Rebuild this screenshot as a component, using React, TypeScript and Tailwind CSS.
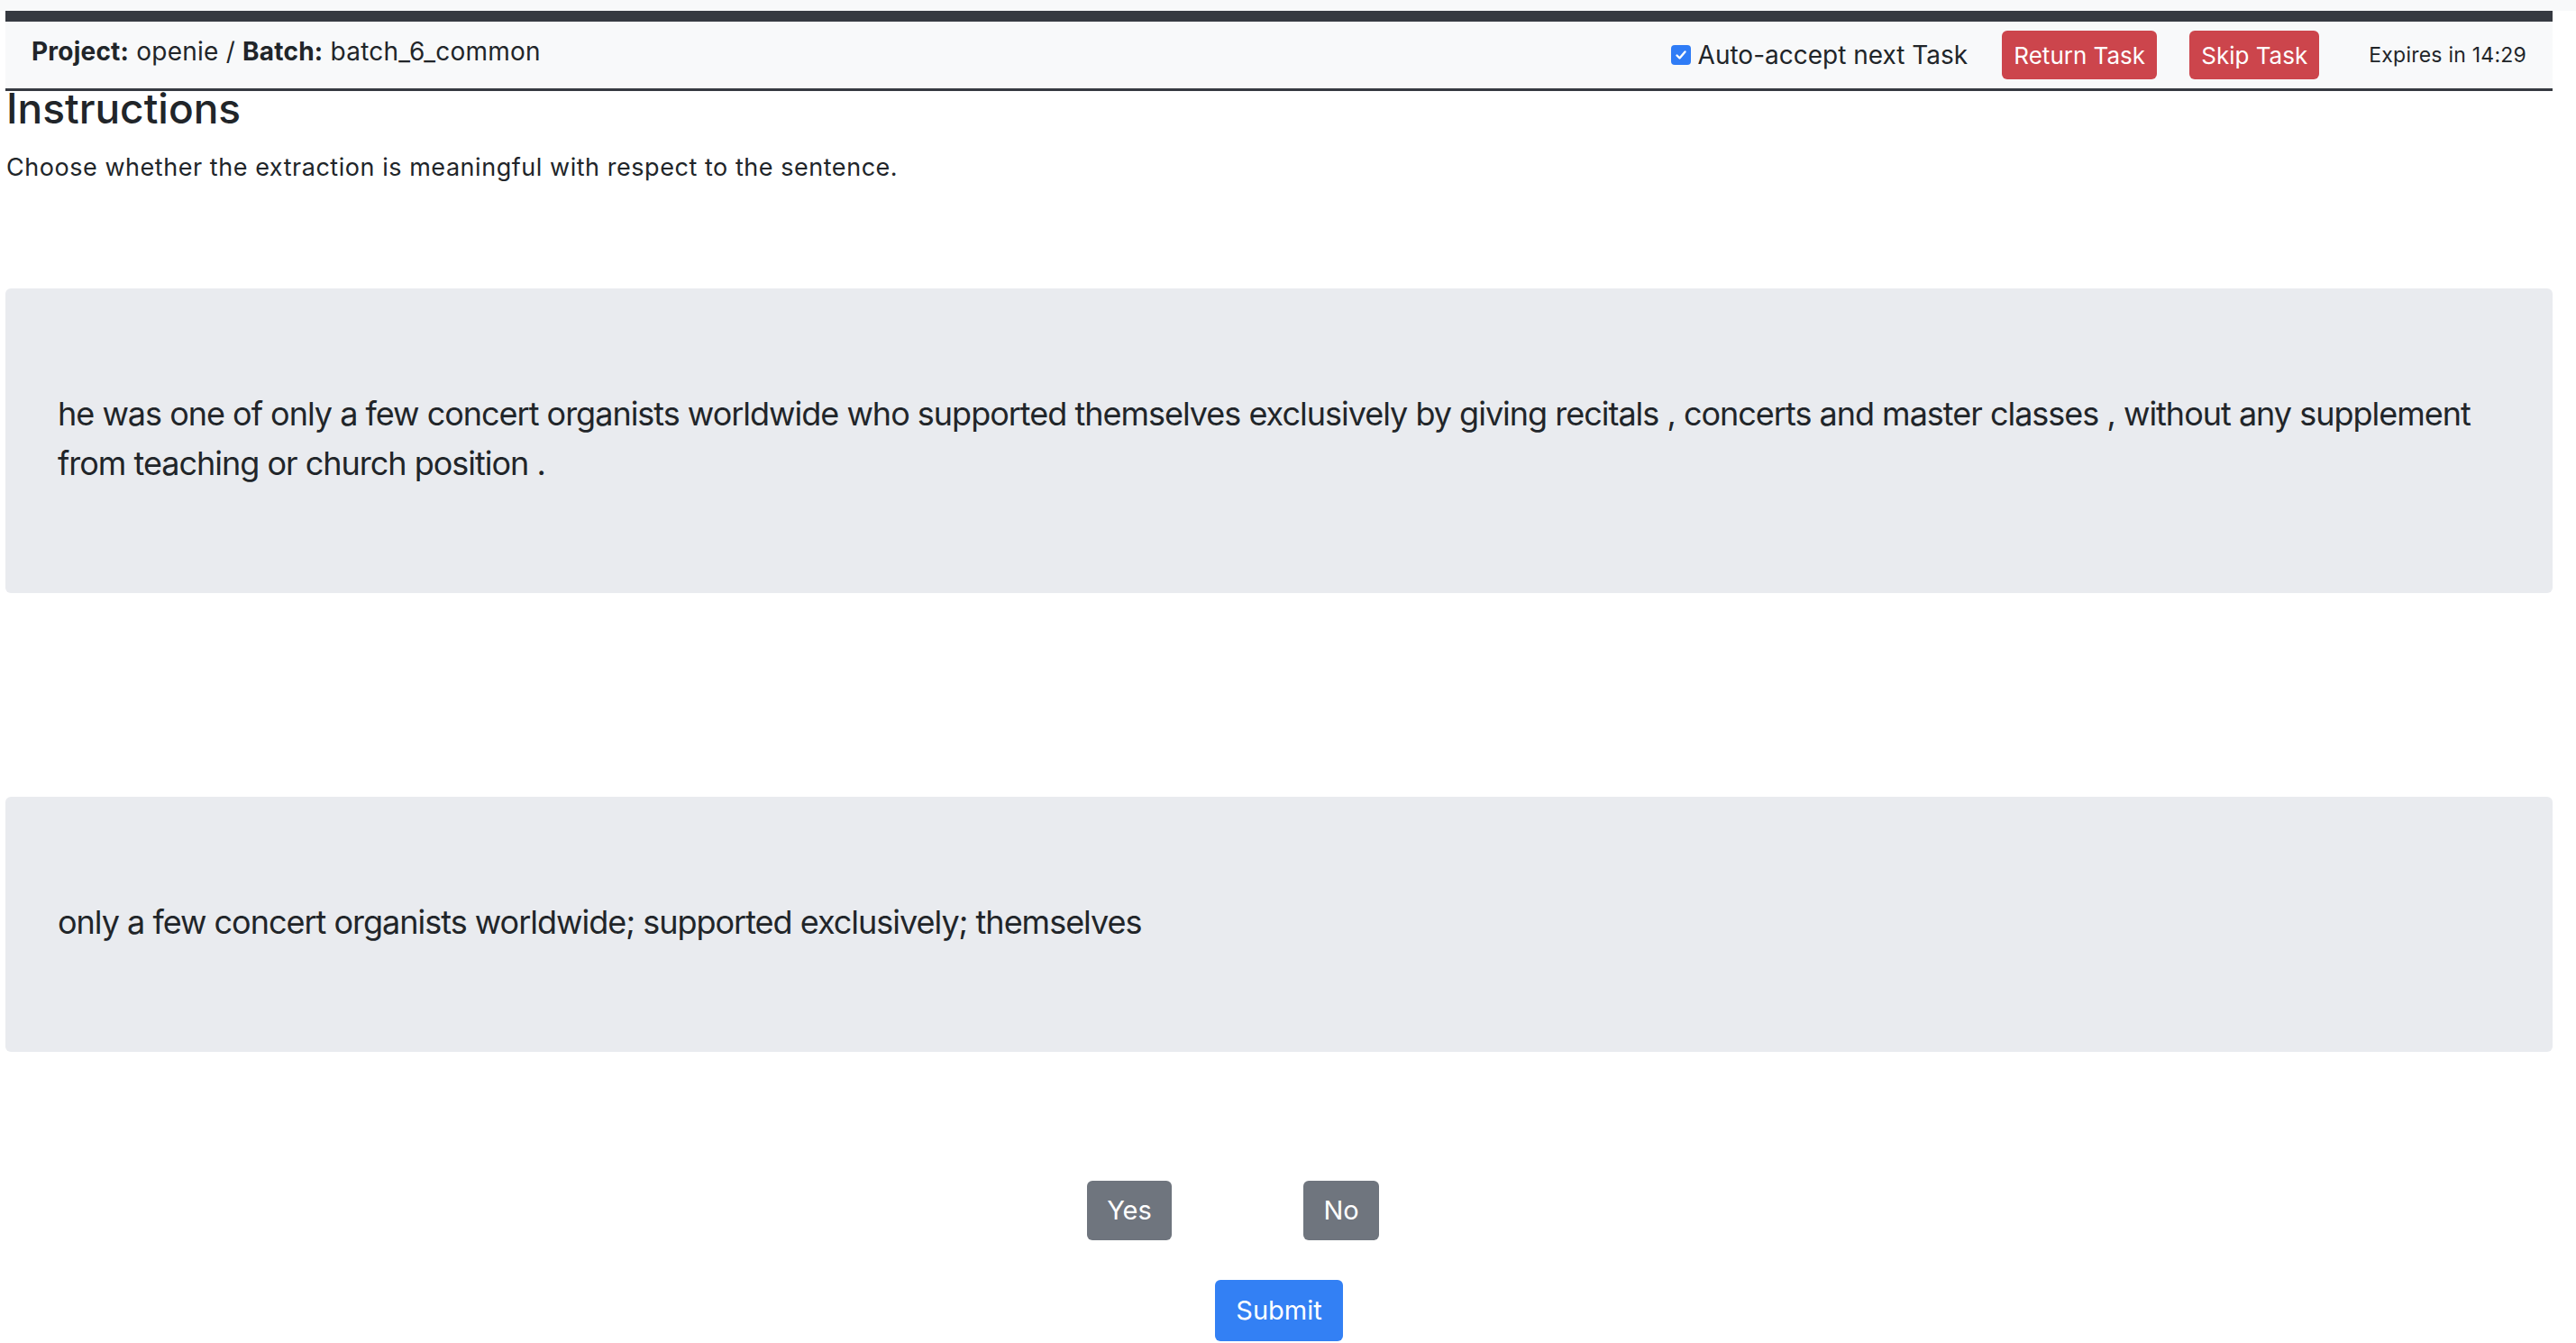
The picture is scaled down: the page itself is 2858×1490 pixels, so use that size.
import React from 'react';

const sentence =
  'he was one of only a few concert organists worldwide who supported themselves exclusively by giving recitals , concerts and master classes , without any supplement from teaching or church position .';
const extraction = 'only a few concert organists worldwide; supported exclusively; themselves';

function CheckBox() {
  return (
    <span className="inline-flex w-[22px] h-[22px] rounded-[4px] bg-[#2f7cf6] items-center justify-center">
      <svg viewBox="0 0 16 16" className="w-[16px] h-[16px]" fill="none">
        <path d="M3.5 8.5l3 3 6-7" stroke="white" strokeWidth="2.4" strokeLinecap="round" strokeLinejoin="round" />
      </svg>
    </span>
  );
}

function NavBar() {
  return (
    <nav className="flex items-center justify-between h-[89px] bg-[#f8f9fa] border-t-[12px] border-b-[3px] border-[#363a41] pl-[29px] pr-[29px]">
      <div className="text-[28px] tracking-[0.008em] mb-[8px]">
        <b className="font-bold">Project:</b> openie / <b className="font-bold">Batch:</b> batch_6_common
      </div>
      <div className="flex items-center">
        <label className="flex items-center gap-[8px] text-[28px]">
          <CheckBox />
          Auto-accept next Task
        </label>
        <button className="ml-[38px] w-[172px] h-[54px] rounded-[6px] bg-[#cc454c] text-white text-[26px]">
          Return Task
        </button>
        <button className="ml-[36px] w-[144px] h-[54px] rounded-[6px] bg-[#cc454c] text-white text-[26px]">
          Skip Task
        </button>
        <span className="ml-[55px] text-[23px] tracking-[0.01em]">Expires in 14:29</span>
      </div>
    </nav>
  );
}

export default function App() {
  return (
    <div className="min-h-screen bg-white text-[#212529] font-['Inter',sans-serif]">
      <div className="h-[12px] bg-[#f8f9fa]" />
      <div className="pl-[6px] pr-[26px]">
        <NavBar />
        <h3 className="text-[46px] font-medium leading-[40px] -mt-[1px] pl-[1px]">Instructions</h3>
        <p className="mt-[26px] text-[27px] tracking-[0.02em] leading-[39px] pl-[1px]">
          Choose whether the extraction is meaningful with respect to the sentence.
        </p>

        <div className="mt-[115px] bg-[#e9ebef] rounded-[6px] pl-[58px] pr-[40px] pt-[112px] pb-[116px] text-[36px] tracking-[-0.028em] leading-[55px]">
          {sentence}
        </div>

        <div className="mt-[226px] bg-[#e9ebef] rounded-[6px] pl-[58px] pr-[40px] pt-[112px] pb-[116px] text-[36px] tracking-[-0.028em] leading-[55px]">
          {extraction}
        </div>

        <div className="mt-[143px] flex justify-center pr-[102px] gap-[146px]">
          <button className="w-[94px] h-[66px] rounded-[6px] bg-[#6f757e] text-white text-[29px]">Yes</button>
          <button className="w-[84px] h-[66px] rounded-[6px] bg-[#6f757e] text-white text-[29px]">No</button>
        </div>

        <div className="mt-[44px] flex justify-center">
          <button className="w-[142px] h-[68px] rounded-[6px] bg-[#3380f4] text-white text-[29px]">Submit</button>
        </div>
      </div>
    </div>
  );
}
